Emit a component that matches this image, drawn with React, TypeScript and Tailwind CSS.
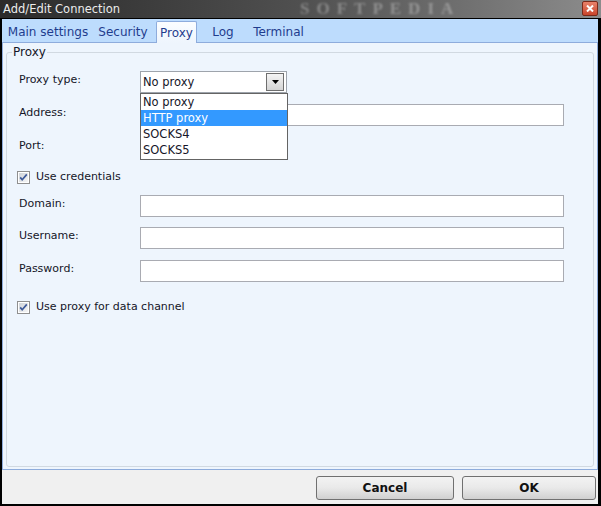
import React from "react";

function CheckBox() {
  return (
    <svg width="13" height="13" viewBox="0 0 13 13" className="shrink-0">
      <defs>
        <linearGradient id="cbg" x1="0" y1="0" x2="1" y2="1">
          <stop offset="0" stopColor="#cfd3d8" />
          <stop offset="1" stopColor="#f7f7f7" />
        </linearGradient>
      </defs>
      <rect x="0.5" y="0.5" width="12" height="12" fill="#ffffff" stroke="#8f8f8f" />
      <rect x="2" y="2" width="9" height="9" fill="url(#cbg)" />
      <path d="M3.2 6.4 L5.2 8.8 L9.8 3.4" fill="none" stroke="#3d5a9a" strokeWidth="1.7" />
    </svg>
  );
}

function TextBox({ width = "w-[424px]" }: { width?: string }) {
  return <div className={`${width} h-[22px] bg-white border border-[#a9abb2]`} />;
}

function Row({ label, children, top }: { label: string; children: React.ReactNode; top: string }) {
  return (
    <div className={`flex items-start ${top}`}>
      <div className="w-[121px] leading-[16px] pt-[1px]">{label}</div>
      {children}
    </div>
  );
}

export default function App() {
  const tabs = [
    { name: "Main settings", w: "w-[88px]", ml: "ml-[2px]" },
    { name: "Security", w: "w-[62px]", ml: "ml-0" },
    { name: "Proxy", w: "w-[41px]", ml: "ml-[2px]", active: true },
    { name: "Log", w: "w-[48px]", ml: "ml-[2px]" },
    { name: "Terminal", w: "w-[63px]", ml: "ml-0" },
  ];

  const options = ["No proxy", "HTTP proxy", "SOCKS4", "SOCKS5"];

  return (
    <div className="w-[601px] h-[506px] flex flex-col bg-black overflow-hidden font-['DejaVu_Sans',sans-serif] text-[11px] text-[#151528]">
      {/* title bar */}
      <div className="relative h-[18px] shrink-0 flex items-center bg-gradient-to-r from-[#2b2b2b] via-[#505050] to-[#8c8c8c] overflow-hidden">
        <span className="pl-[3px] text-[#ececec] text-[11.5px] leading-[18px]">Add/Edit Connection</span>
        <span className="absolute left-[300px] top-[1px] font-['Liberation_Serif',serif] font-bold text-[17px] leading-[16px] tracking-[7px] text-white/30 blur-[1px]">
          SOFTPEDIA
        </span>
        <div className="absolute right-[3px] top-[1px] w-[16px] h-[15px] rounded-[2px] bg-gradient-to-b from-[#e8826a] to-[#c9442a] border border-[#7a2a1a] flex items-center justify-center">
          <svg width="8" height="7" viewBox="0 0 8 7">
            <path d="M1 0.5 L7 6.5 M7 0.5 L1 6.5" stroke="#ffffff" strokeWidth="2" />
          </svg>
        </div>
      </div>

      {/* window body */}
      <div className="flex-1 flex flex-col border-t border-l-2 border-r-[3px] border-b-2 border-black min-h-0">
        {/* tab strip */}
        <div className="h-[23px] shrink-0 bg-[#bddcfd] flex items-end">
          {tabs.map((t) =>
            t.active ? (
              <div
                key={t.name}
                className={`${t.w} ${t.ml} relative z-10 h-[22px] -mb-[1px] flex items-center justify-center border border-b-0 border-[#8eacdc] rounded-t-[2px] bg-gradient-to-b from-[#fbfdff] to-[#eef5fd] text-[#1f3c8e] text-[12px]`}
              >
                {t.name}
              </div>
            ) : (
              <div key={t.name} className={`${t.w} ${t.ml} h-[21px] flex items-center justify-center text-[#1f3c8e] text-[12px]`}>
                {t.name}
              </div>
            )
          )}
        </div>

        {/* panel */}
        <div className="h-[428px] shrink-0 bg-[#eef5fd] border border-[#8eacdc] px-[3px] pt-[2px] pb-[2px] flex">
          <fieldset className="flex-1 border border-[#d1d9e1] rounded-[3px] px-[12px] pt-[12px] m-0 min-w-0">
            <legend className="-ml-[7px] px-[1px] leading-[14px] text-[12px]">Proxy</legend>

            <div className="relative">
              <Row label="Proxy type:" top="mt-0">
                <div className="relative w-[147px] h-[22px] bg-white border border-[#9ea4ac] flex items-center">
                  <span className="pl-[2px] leading-[16px] text-[11.5px]">No proxy</span>
                  <div className="absolute right-[2px] top-[1px] w-[18px] h-[18px] border border-[#6e6e6e] bg-gradient-to-b from-[#f4f4f4] to-[#d4d4d4] flex items-center justify-center">
                    <svg width="7" height="4" viewBox="0 0 7 4">
                      <path d="M0 0 H7 L3.5 4 Z" fill="#000000" />
                    </svg>
                  </div>
                  {/* open list */}
                  <div className="absolute left-[-1px] top-[21px] z-20 w-[148px] h-[67px] bg-white border border-[#646464] flex flex-col">
                    {options.map((o) => (
                      <div
                        key={o}
                        className={`h-[16px] leading-[16px] pl-[2px] text-[11.5px] ${
                          o === "HTTP proxy" ? "bg-[#3399ff] text-white" : ""
                        }`}
                      >
                        {o}
                      </div>
                    ))}
                  </div>
                </div>
              </Row>

              <Row label="Address:" top="mt-[11px]">
                <TextBox />
              </Row>

              <Row label="Port:" top="mt-[11px]">
                <TextBox width="w-[100px]" />
              </Row>

              <div className="mt-[11px] -ml-[2px] h-[14px] flex items-center gap-[6px]">
                <CheckBox />
                <span className="leading-[14px]">Use credentials</span>
              </div>

              <Row label="Domain:" top="mt-[11px]">
                <TextBox />
              </Row>

              <Row label="Username:" top="mt-[10px]">
                <TextBox />
              </Row>

              <Row label="Password:" top="mt-[11px]">
                <TextBox />
              </Row>

              <div className="mt-[18px] -ml-[2px] h-[14px] flex items-center gap-[6px]">
                <CheckBox />
                <span className="leading-[14px]">Use proxy for data channel</span>
              </div>
            </div>
          </fieldset>
        </div>

        {/* footer */}
        <div className="flex-1 bg-[#f0f0f0] flex justify-end items-start pt-[6px] pr-[2px] gap-[8px]">
          <button className="w-[138px] h-[24px] rounded-[3px] border border-[#707070] bg-gradient-to-b from-[#f3f3f3] via-[#e9e9e9] to-[#d0d0d0] font-bold text-[12px] text-[#111]">
            Cancel
          </button>
          <button className="w-[134px] h-[24px] rounded-[3px] border border-[#707070] bg-gradient-to-b from-[#f3f3f3] via-[#e9e9e9] to-[#d0d0d0] font-bold text-[12px] text-[#111]">
            OK
          </button>
        </div>
      </div>
    </div>
  );
}
